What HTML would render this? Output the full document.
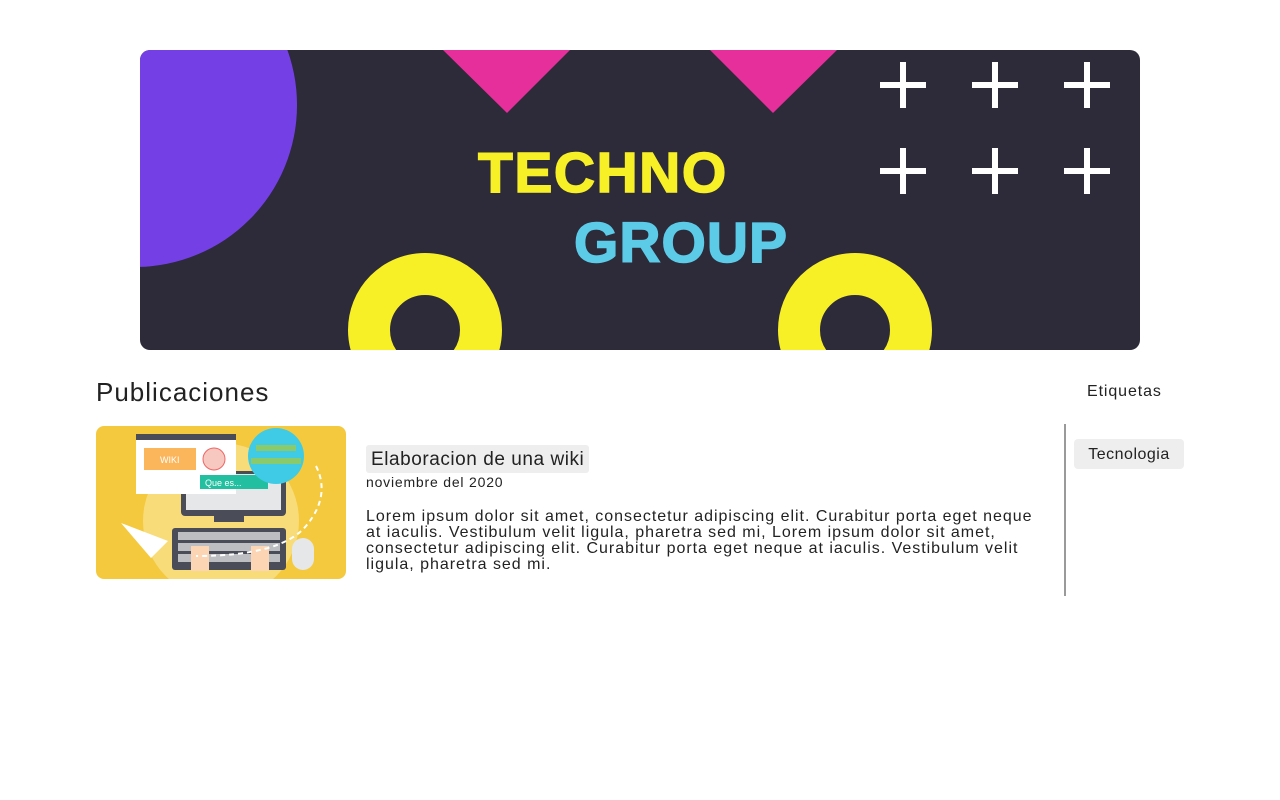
<!DOCTYPE html>
<html><head><meta charset="utf-8"><style>
*{margin:0;padding:0;box-sizing:border-box}
body{width:1280px;height:800px;background:#fff;font-family:"Liberation Sans",sans-serif;color:#222;position:relative;overflow:hidden}
.abs{position:absolute}
h2{position:absolute;left:96px;top:377px;font-size:26px;font-weight:400;color:#222;letter-spacing:1px}
.et{left:1087px;top:383px;font-size:16px;letter-spacing:0.9px}
.vline{left:1064px;top:424px;width:2px;height:172px;background:#9a9a9a}
.tag{left:1074px;top:439px;width:110px;height:30px;background:#eee;border-radius:4px;font-size:16px;text-align:center;line-height:31px;letter-spacing:0.5px}
.title{left:366px;top:445px;height:28px;padding:0 5px;background:#eee;border-radius:3px;font-size:19px;line-height:29px;letter-spacing:0.55px}
.date{left:366px;top:474px;font-size:14px;letter-spacing:0.8px}
.body{left:366px;top:509px;font-size:16px;line-height:16px;white-space:nowrap;letter-spacing:0.98px}
</style></head><body>
<svg class="abs" style="left:140px;top:50px" width="1000" height="300" viewBox="140 50 1000 300">
<defs><clipPath id="c"><rect x="140" y="50" width="1000" height="300" rx="10"/></clipPath></defs>
<g clip-path="url(#c)">
<rect x="140" y="50" width="1000" height="300" fill="#2d2a3a"/>
<circle cx="135" cy="105" r="162" fill="#7440e6"/>
<polygon points="443,50 570,50 507,113" fill="#e62f9b"/>
<polygon points="710,50 837,50 773,113" fill="#e62f9b"/>
<g fill="#fff">
<rect x="880" y="82" width="46" height="6"/><rect x="900" y="62" width="6" height="46"/>
<rect x="972" y="82" width="46" height="6"/><rect x="992" y="62" width="6" height="46"/>
<rect x="1064" y="82" width="46" height="6"/><rect x="1084" y="62" width="6" height="46"/>
<rect x="880" y="168" width="46" height="6"/><rect x="900" y="148" width="6" height="46"/>
<rect x="972" y="168" width="46" height="6"/><rect x="992" y="148" width="6" height="46"/>
<rect x="1064" y="168" width="46" height="6"/><rect x="1084" y="148" width="6" height="46"/>
</g>
<circle cx="425" cy="330" r="56" fill="none" stroke="#f8f027" stroke-width="42"/>
<circle cx="855" cy="330" r="56" fill="none" stroke="#f8f027" stroke-width="42"/>
<text x="478" y="192" font-family="Liberation Sans" font-weight="700" font-size="57" letter-spacing="1.5" fill="#f8f027" stroke="#f8f027" stroke-width="1.5">TECHNO</text>
<text x="574" y="262" font-family="Liberation Sans" font-weight="700" font-size="57" letter-spacing="1" fill="#5bcbe8" stroke="#5bcbe8" stroke-width="1.5">GROUP</text>
</g></svg>
<h2>Publicaciones</h2>
<div class="abs et">Etiquetas</div>
<svg class="abs" style="left:96px;top:426px" width="250" height="153" viewBox="0 0 250 153">
<rect width="250" height="153" rx="8" fill="#f4c93e"/>
<circle cx="125" cy="95" r="78" fill="#f8dc7a"/>
<rect x="85" y="45" width="105" height="45" rx="4" fill="#4a4d57"/>
<rect x="90" y="48" width="95" height="36" fill="#e6e7e9"/>
<rect x="118" y="90" width="30" height="6" fill="#4a4d57"/>
<rect x="76" y="102" width="114" height="42" rx="3" fill="#4a4d57"/>
<g fill="#bdbec2"><rect x="82" y="106" width="102" height="8"/><rect x="82" y="117" width="102" height="8"/><rect x="82" y="128" width="102" height="8"/></g>
<rect x="40" y="8" width="100" height="60" fill="#fff"/>
<rect x="40" y="8" width="100" height="6" fill="#4a4d57"/>
<rect x="48" y="22" width="52" height="22" fill="#fbb65b"/>
<text x="64" y="37" font-size="9" fill="#fff" font-family="Liberation Sans">WIKI</text>
<circle cx="118" cy="33" r="11" fill="#f7c8bf" stroke="#e66" stroke-width="1"/>
<rect x="104" y="49" width="68" height="14" fill="#22c0a0"/>
<text x="109" y="60" font-size="9" fill="#fff" font-family="Liberation Sans">Que es...</text>
<circle cx="180" cy="30" r="28" fill="#3fcbe6"/>
<path d="M155 35h50M160 22h40" stroke="#8bc96d" stroke-width="6"/>
<polygon points="25,97 72,115 55,132" fill="#fff"/>
<rect x="196" y="112" width="22" height="32" rx="11" fill="#e6e7e9"/>
<path d="M95 120v25h18v-25zM155 120v25h18v-25z" fill="#fcd6b4"/>
<path d="M220 40q15 30-10 60t-110 30" fill="none" stroke="#fff" stroke-width="2" stroke-dasharray="5 4"/>
</svg>
<div class="abs title">Elaboracion de una wiki</div>
<div class="abs date">noviembre del 2020</div>
<div class="abs body">Lorem ipsum dolor sit amet, consectetur adipiscing elit. Curabitur porta eget neque<br>at iaculis. Vestibulum velit ligula, pharetra sed mi, Lorem ipsum dolor sit amet,<br>consectetur adipiscing elit. Curabitur porta eget neque at iaculis. Vestibulum velit<br>ligula, pharetra sed mi.</div>
<div class="abs vline"></div>
<div class="abs tag">Tecnologia</div>
</body></html>
